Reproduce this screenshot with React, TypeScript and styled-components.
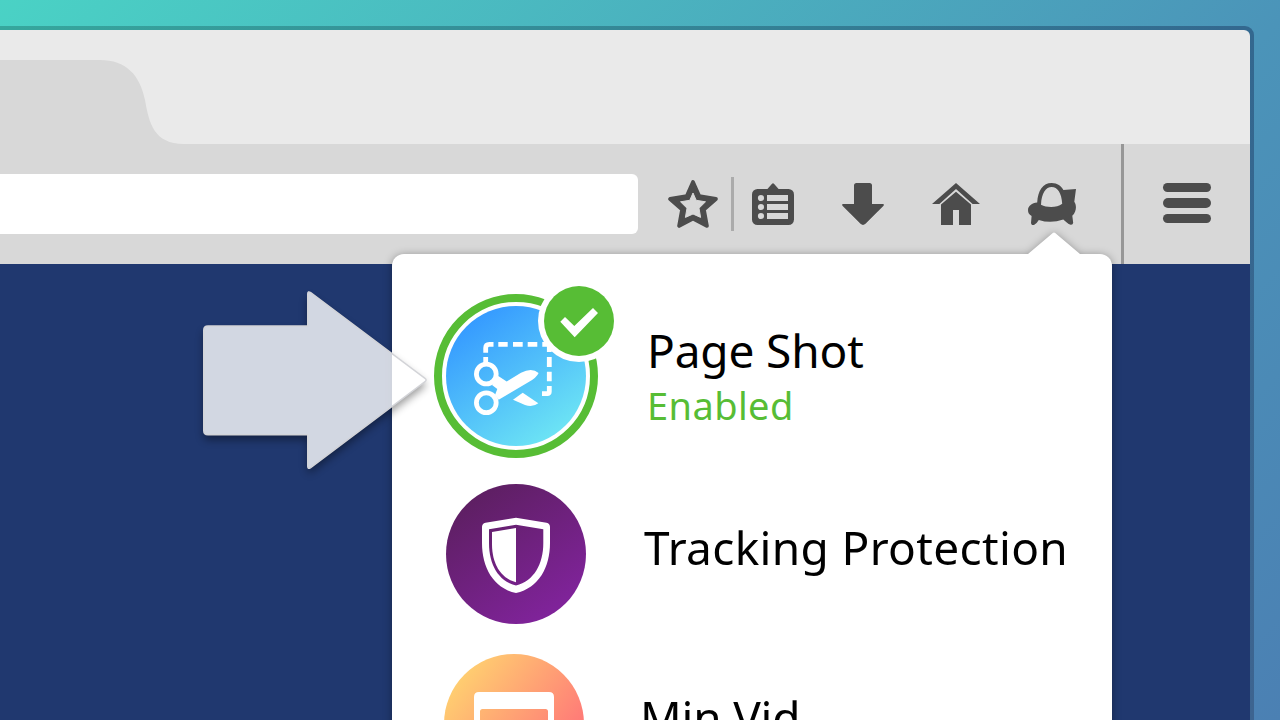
import React from "react";
import styled, { createGlobalStyle } from "styled-components";

const ink = "#4c4c4c";
const chrome = "#d8d8d8";
const green = "#57bd35";

const GlobalStyle = createGlobalStyle`
  * { box-sizing: border-box; }
  body { margin: 0; overflow: hidden; }
  svg { display: block; flex: none; }
`;

const Desktop = styled.div`
  position: relative;
  width: 1280px;
  height: 720px;
  padding-top: 26px;
  overflow: hidden;
  background: linear-gradient(135deg, #4ad2c5 0%, #4b94b9 65%, #4b80b3 100%);
`;

const BrowserFrame = styled.div`
  width: 1254px;
  height: 694px;
  padding: 4px 4px 0 0;
  border-radius: 0 9px 0 0;
  background: linear-gradient(135deg, #36a79d 0%, #33688f 64%, #3d6490 100%);
`;

const BrowserWindow = styled.div`
  display: flex;
  flex-direction: column;
  height: 690px;
  overflow: hidden;
  border-radius: 0 6px 0 0;
  background: #eaeaea;
`;

const TabStrip = styled.div`
  display: flex;
  align-items: flex-end;
  height: 114px;
`;

const Toolbar = styled.div`
  display: flex;
  align-items: center;
  height: 120px;
  background: ${chrome};
`;

const AddressField = styled.div`
  width: 638px;
  height: 60px;
  margin-right: 30px;
  border-radius: 0 6px 6px 0;
  background: #fff;
`;

const Separator = styled.div<{ $height: number; $tone: string; $gap: string }>`
  width: 3px;
  height: ${(p) => p.$height}px;
  margin: ${(p) => p.$gap};
  background: ${(p) => p.$tone};
`;

const ToolIcons = styled.div`
  display: flex;
  gap: 48px;
`;

const MenuButton = styled.div`
  display: flex;
  flex-direction: column;
  gap: 6px;
  width: 48px;
  margin: -2px 0 0 39px;
`;

const MenuBar = styled.span`
  height: 9.4px;
  border-radius: 5px;
  background: ${ink};
`;

const PageContent = styled.div`
  flex: 1;
  background: #20386f;
`;

const Doorhanger = styled.div`
  position: absolute;
  left: 392px;
  top: 232px;
  width: 720px;
  filter: drop-shadow(0 1px 4px rgba(0, 0, 0, 0.34));
`;

const Caret = styled.svg`
  margin-left: 636px;
`;

const Panel = styled.div`
  display: flex;
  flex-direction: column;
  height: 520px;
  padding: 40px 42px 0;
  border-radius: 12px 12px 0 0;
  background: #fff;
`;

const Row = styled.div<{ $height: number; $inset: number; $gap: number; $after: number }>`
  display: flex;
  align-items: center;
  gap: ${(p) => p.$gap}px;
  height: ${(p) => p.$height}px;
  margin-bottom: ${(p) => p.$after}px;
  padding-left: ${(p) => p.$inset}px;
`;

const IconHolder = styled.div`
  position: relative;
`;

const Badge = styled.svg`
  position: absolute;
  left: 104px;
  top: -14px;
`;

const Labels = styled.div<{ $lift: number }>`
  padding-bottom: ${(p) => p.$lift}px;
  font-family: "Noto Sans", "Open Sans", sans-serif;
  white-space: nowrap;
`;

const Title = styled.div<{ $spacing: number }>`
  font-size: 46px;
  line-height: 62px;
  letter-spacing: ${(p) => p.$spacing}px;
  color: #000;
`;

const Status = styled.div`
  font-size: 38px;
  line-height: 48px;
  letter-spacing: 0.4px;
  color: ${green};
`;

const Pointer = styled.svg`
  position: absolute;
  left: 183px;
  top: 271px;
`;

const TabShape = () => (
  <svg width="190" height="84" viewBox="0 0 190 84">
    <path fill={chrome} d="M0 0H100C126 0 140 15 145 40C149 63 154 84 184 84H0Z" />
  </svg>
);

const StarIcon = () => (
  <svg width="50" height="48" viewBox="0 0 50 48">
    <path
      fill={ink}
      stroke={ink}
      strokeWidth="4"
      strokeLinejoin="round"
      d="M25 2.2L31.2 16.2L47.8 19L35.8 29.5L38.8 45.8L25 38.4L11.2 45.8L14.2 29.5L2.2 19L18.8 16.2Z"
    />
    <path
      fill={chrome}
      stroke={chrome}
      strokeLinejoin="round"
      d="M25 13L28.2 20.3L37.5 21.8L31 28.2L32.6 37.4L25 34L17.4 37.4L19 28.2L12.5 21.8L21.8 20.3Z"
    />
  </svg>
);

const ListIcon = () => (
  <svg width="42" height="42" viewBox="0 0 42 42">
    <path fill={ink} d="M15 6.5L20 .8Q21-.2 22 .8L27 6.5Z" />
    <rect y="6" width="42" height="36" rx="5.5" fill={ink} />
    {[12, 21, 30].map((y) => (
      <g key={y} fill={chrome}>
        <circle cx="9" cy={y + 3} r="3.1" />
        <rect x="15" y={y} width="21" height="6" />
      </g>
    ))}
  </svg>
);

const DownloadIcon = () => (
  <svg width="42" height="42" viewBox="0 0 42 42">
    <path
      fill={ink}
      d="M12 2.5Q12 0 14.5 0H27.5Q30 0 30 2.5V21H40.5Q43 21 41.3 23L23.5 40.8Q21 43 18.5 40.8L.7 23Q-1 21 1.5 21H12Z"
    />
  </svg>
);

const HomeIcon = () => (
  <svg width="48" height="42" viewBox="0 0 48 42">
    <path fill={ink} d="M24 0L48 21H40.6L24 6L7.4 21H0Z" />
    <path fill={ink} d="M24 8.8L39 21.6V42H27V27H21V42H9V21.6Z" />
  </svg>
);

const PilotIcon = () => (
  <svg width="49" height="42" viewBox="0 0 49 42">
    <path
      fill={ink}
      fillRule="evenodd"
      d="M9.2 19.5C9.8 7.5 15 0 23.7 0C29.5 0 33.2 3 35.4 6.9L48 6L46.3 18.7C49 22.5 48.4 28.5 44.3 32.8L45.2 39.8Q44.8 42.4 42 41.6Q39.5 40.5 35.3 36.4Q23 41 10.8 37Q8.5 41 6 42Q3.2 42.6 3 40L3.6 33C1 31.5 0 29.8 0 27C0 23 4 20 9.2 19.5ZM23.7 4C17.8 4 13.6 10 13 21.7C19 24.8 29 24.8 34.2 20.7C33.6 10 29.4 4 23.7 4Z"
    />
  </svg>
);

const PageShotIcon = () => (
  <svg width="164" height="164" viewBox="0 0 164 164">
    <defs>
      <linearGradient id="shot" x1="0.2" y1="0.1" x2="0.8" y2="0.95">
        <stop offset="0" stopColor="#369bff" />
        <stop offset="1" stopColor="#6ee6f4" />
      </linearGradient>
    </defs>
    <circle cx="82" cy="82" r="78" fill="#fff" stroke={green} strokeWidth="8" />
    <circle cx="82" cy="82" r="70" fill="url(#shot)" />
    <g fill="none" stroke="#fff" strokeWidth="4.8">
      <path d="M51.7 58.7V54Q51.7 50.4 55.4 50.4H59.5M64.3 50.4H73.7M79 50.4H88.7M93.7 50.4H103.3M108.3 50.4H115.3V58M51.7 63V70M115.3 63V73M115.3 77.7V87.3M115.3 92V97.6Q115.3 99.6 113.3 99.6H108" />
      <circle cx="52.3" cy="80" r="9.9" />
      <circle cx="52.3" cy="108.7" r="9.9" />
    </g>
    <g fill="#fff">
      <path d="M64.3 82L72.7 87.4L87 78.7Q98 73.4 104.6 79Q102.7 83.7 94.3 88.3L64.7 105.7L61 101L63.3 95L58 91Z" />
      <path d="M88.7 98.7L104.3 109.3Q98.5 113.8 91 111L79 105.7Z" />
    </g>
  </svg>
);

const ShieldIcon = () => (
  <svg width="140" height="140" viewBox="0 0 140 140">
    <defs>
      <linearGradient id="shield" x1="0.2" y1="0.1" x2="0.75" y2="0.9">
        <stop offset="0" stopColor="#5e1f63" />
        <stop offset="1" stopColor="#7f2399" />
      </linearGradient>
    </defs>
    <circle cx="70" cy="70" r="70" fill="url(#shield)" />
    <path
      fill="#fff"
      fillRule="evenodd"
      d="M70 33.8L100.5 38.7Q104 39.5 104 43V59C104 83 93 104 70 109C47 104 36 83 36 59V43Q36 39.5 39.5 38.7ZM70 40.8L43 45.3V59C43 80 52 97 70 101.5C88 97 97.3 80 97.3 59V45.3Z"
    />
    <path fill="#fff" d="M70 44V98.3C54 94 46 79 46 60V48Z" />
  </svg>
);

const MinVidIcon = () => (
  <svg width="140" height="140" viewBox="0 0 140 140">
    <defs>
      <linearGradient id="vid" x1="0.1" y1="0.15" x2="0.95" y2="0.8">
        <stop offset="0" stopColor="#ffd070" />
        <stop offset="0.8" stopColor="#ff7f77" />
        <stop offset="1" stopColor="#ff6f74" />
      </linearGradient>
    </defs>
    <circle cx="70" cy="70" r="70" fill="url(#vid)" />
    <path
      fill="#fff"
      fillRule="evenodd"
      d="M35 38H105Q110 38 110 43V97Q110 102 105 102H35Q30 102 30 97V43Q30 38 35 38ZM38.5 55Q36 55 36 57.5V96H104V57.5Q104 55 101.5 55Z"
    />
  </svg>
);

const EnabledBadge = () => (
  <Badge width="82" height="82" viewBox="0 0 82 82">
    <circle cx="41" cy="41" r="41" fill="#fff" />
    <circle cx="41" cy="41" r="35" fill={green} />
    <path fill="#fff" d="M22.3 41.7L27 37L36.3 46L55 28L60 33L36.7 57.3Z" />
  </Badge>
);

const PointerArrow = () => (
  <Pointer width="270" height="230" viewBox="0 0 270 230">
    <defs>
      <filter id="cast" x="-20%" y="-20%" width="140%" height="140%">
        <feGaussianBlur in="SourceAlpha" stdDeviation="4" />
        <feOffset dy="5" result="soft" />
        <feComposite in="soft" in2="SourceAlpha" operator="out" />
      </filter>
      <path
        id="arrow"
        d="M25 55H124.7V23Q124.7 19.6 127.7 21.6L242 107.4Q244.2 109 242 110.6L127.7 196.6Q124.7 198.6 124.7 195.2V163.7H25Q20.7 163.7 20.7 159.4V59.3Q20.7 55 25 55Z"
      />
    </defs>
    <use href="#arrow" filter="url(#cast)" opacity="0.4" />
    <use href="#arrow" fill="#fff" fillOpacity="0.8" stroke="#d3d4d8" strokeWidth="1.4" />
  </Pointer>
);

export default function App() {
  return (
    <Desktop>
      <GlobalStyle />
      <BrowserFrame>
        <BrowserWindow>
          <TabStrip>
            <TabShape />
          </TabStrip>
          <Toolbar>
            <AddressField />
            <StarIcon />
            <Separator $height={54} $tone="#ababab" $gap="0 18px 0 13px" />
            <ToolIcons>
              <ListIcon />
              <DownloadIcon />
              <HomeIcon />
              <PilotIcon />
            </ToolIcons>
            <Separator $height={120} $tone="#979797" $gap="0 0 0 44px" />
            <MenuButton>
              <MenuBar />
              <MenuBar />
              <MenuBar />
            </MenuButton>
          </Toolbar>
          <PageContent />
        </BrowserWindow>
      </BrowserFrame>
      <Doorhanger>
        <Caret width="52" height="22" viewBox="0 0 52 22">
          <path fill="#fff" d="M0 22L24.8 1Q26-.2 27.2 1L52 22Z" />
        </Caret>
        <Panel>
          <Row $height={164} $inset={0} $gap={49} $after={26}>
            <IconHolder>
              <PageShotIcon />
              <EnabledBadge />
            </IconHolder>
            <Labels $lift={4}>
              <Title $spacing={-0.15}>Page Shot</Title>
              <Status>Enabled</Status>
            </Labels>
          </Row>
          <Row $height={140} $inset={12} $gap={58} $after={30}>
            <ShieldIcon />
            <Labels $lift={14}>
              <Title $spacing={0.35}>Tracking Protection</Title>
            </Labels>
          </Row>
          <Row $height={140} $inset={10} $gap={56} $after={0}>
            <MinVidIcon />
            <Labels $lift={14}>
              <Title $spacing={-0.2}>Min Vid</Title>
            </Labels>
          </Row>
        </Panel>
      </Doorhanger>
      <PointerArrow />
    </Desktop>
  );
}
